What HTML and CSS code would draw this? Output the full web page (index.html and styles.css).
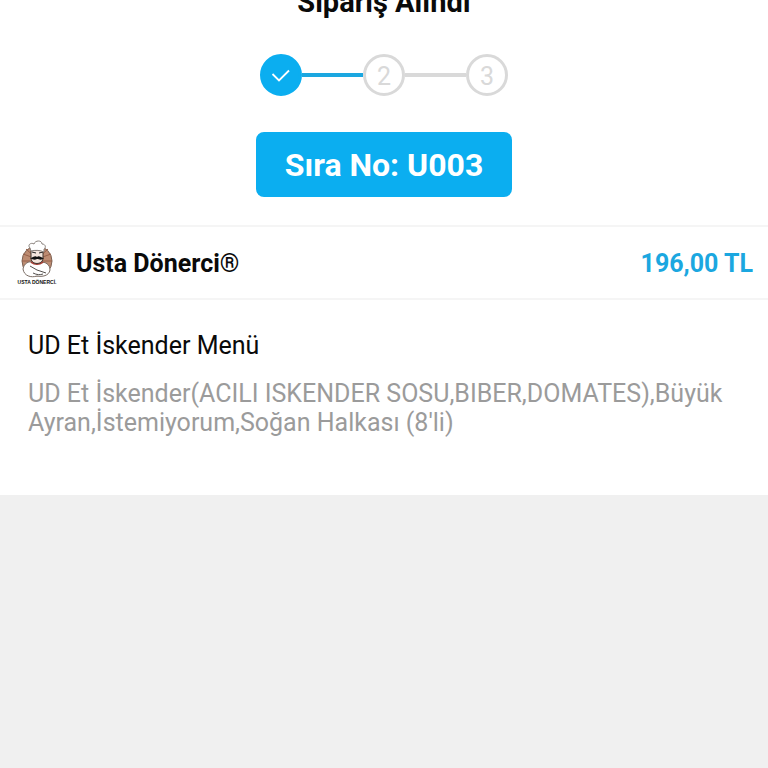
FILE: index.html
```html
<!DOCTYPE html>
<html lang="tr">
  <head>
    <meta charset="UTF-8" />
    <meta name="viewport" content="width=device-width, initial-scale=1.0" />
    <title>Sipariş Alındı</title>
    <link rel="stylesheet" href="styles.css">
  </head>
  <body>
    <main class="siparis">
      <section class="durum">
        <h1>Sipariş Alındı</h1>

        <ol class="adimlar">
          <li class="adim tamam">
            <svg width="20" height="16" viewBox="0 0 20 16" role="img" aria-label="1">
              <path d="M1.5 7 L8 13.5 L18 3.5" fill="none" stroke="#fff" stroke-width="1.8" />
            </svg>
          </li>
          <li class="cizgi dolu" aria-hidden="true"></li>
          <li class="adim">2</li>
          <li class="cizgi" aria-hidden="true"></li>
          <li class="adim">3</li>
        </ol>

        <p class="sira-no">Sıra No: U003</p>
      </section>

      <section class="restoran">
        <svg class="logo" width="40" height="48" viewBox="0 0 40 48" role="img" aria-label="Usta Dönerci">
          <circle cx="20" cy="22" r="15" fill="#bd8c72" stroke="#7d6355" />
          <path d="M20 20 L6 15 M20 20 L9 10 M20 20 L31 10 M20 20 L34 15 M20 22 L5 22 M20 22 L35 22" stroke="#96604a" stroke-width="1" />
          <!-- gövde ve kollar -->
          <path d="M6 30 C7 24 12 22 16 23 L24 23 C28 23 33 25 33 31 C32 37 25 38 20 37 C14 39 7 37 6 30 Z" fill="#fff" stroke="#7a6c64" stroke-width="1" />
          <path d="M13 27 L20 31 L29 34 M16 34 C20 36 23 36 26 35" fill="none" stroke="#54504d" stroke-width="1" />
          <path d="M14 23 Q20 27 26 23" fill="none" stroke="#a63c32" stroke-width="2" />
          <!-- yüz -->
          <path d="M14 11 H26 V20 C25 26 15 26 14 20 Z" fill="#f3e5dc" stroke="#413631" stroke-width="1" />
          <path d="M15 13 L19 14 M22 14 L26 13" stroke="#222" stroke-width="1" />
          <path d="M13 19 C16 19 18 16 20 18 C22 16 24 19 27 19 C24 22 22 20 20 20 C18 21 16 21 13 19 Z" fill="#111" />
          <!-- şapka -->
          <path d="M14 12 L13 9 C10 6 14 3 17 5 C18 1 25 1 25 5 C29 5 29 9 27 10 L27 13 C23 11 18 11 14 12 Z" fill="#fff" stroke="#8a827d" stroke-width="1" />
          <text x="20" y="45" text-anchor="middle" class="logo-yazi">USTA DÖNERCİ.</text>
        </svg>
        <h2>Usta Dönerci®</h2>
        <span class="tutar">196,00 TL</span>
      </section>

      <section class="urun">
        <h3>UD Et İskender Menü</h3>
        <p>UD Et İskender(ACILI ISKENDER SOSU,BIBER,DOMATES),Büyük Ayran,İstemiyorum,Soğan Halkası (8'li)</p>
      </section>
    </main>
  </body>
</html>
```

FILE: styles.css
```css
* {
  box-sizing: border-box;
}
body {
  margin: 0;
  font-family: Roboto, sans-serif;
  font-size: 25px;
  color: #0a0a0a;
  background-color: #f0f0f0;
}
h1, h2, h3, p {
  margin: 0;
}
.siparis {
  background-color: #fff;
  overflow: hidden;
}
.durum {
  display: flex;
  flex-direction: column;
  align-items: center;
  padding-bottom: 28px;
}
h1 {
  margin-top: -13px;
  font-size: 29px;
  line-height: 30px;
  font-weight: 700;
}
.adimlar {
  display: flex;
  align-items: center;
  list-style: none;
  margin: 37px 0 36px;
  padding: 0;
}
.adim {
  display: flex;
  align-items: center;
  justify-content: center;
  width: 42px;
  height: 42px;
  padding-top: 2px;
  border: 3px solid #d9d9d9;
  border-radius: 50%;
  color: #d9d9d9;
}
.tamam {
  padding-top: 0;
  background-color: #0baef0;
  border-color: #0baef0;
}
.cizgi {
  width: 61px;
  height: 4px;
  background-color: #d9d9d9;
}
.dolu {
  background-color: #1ba7e0;
}
.sira-no {
  padding: 13px 29px 11px;
  border-radius: 8px;
  background-color: #0baef0;
  color: #fff;
  font-size: 32px;
  line-height: 41px;
  font-weight: 700;
}
.restoran {
  display: flex;
  align-items: center;
  padding: 12px 15px 11px 17px;
  border-top: 2px solid #f5f5f5;
  border-bottom: 2px solid #f5f5f5;
}
.logo-yazi {
  font-family: "Liberation Sans Narrow", "Liberation Sans", sans-serif;
  font-size: 5px;
  font-weight: 700;
  fill: #111;
}
h2 {
  flex: 1;
  margin-left: 19px;
  font-size: 25px;
  font-weight: 700;
}
.tutar {
  color: #1ba7e0;
  font-weight: 700;
}
.urun {
  padding: 31px 28px 58px;
}
h3 {
  font-size: 25px;
  line-height: 29px;
  font-weight: 400;
}
.urun p {
  margin-top: 19px;
  line-height: 29px;
  color: #9b9b9b;
}
```
